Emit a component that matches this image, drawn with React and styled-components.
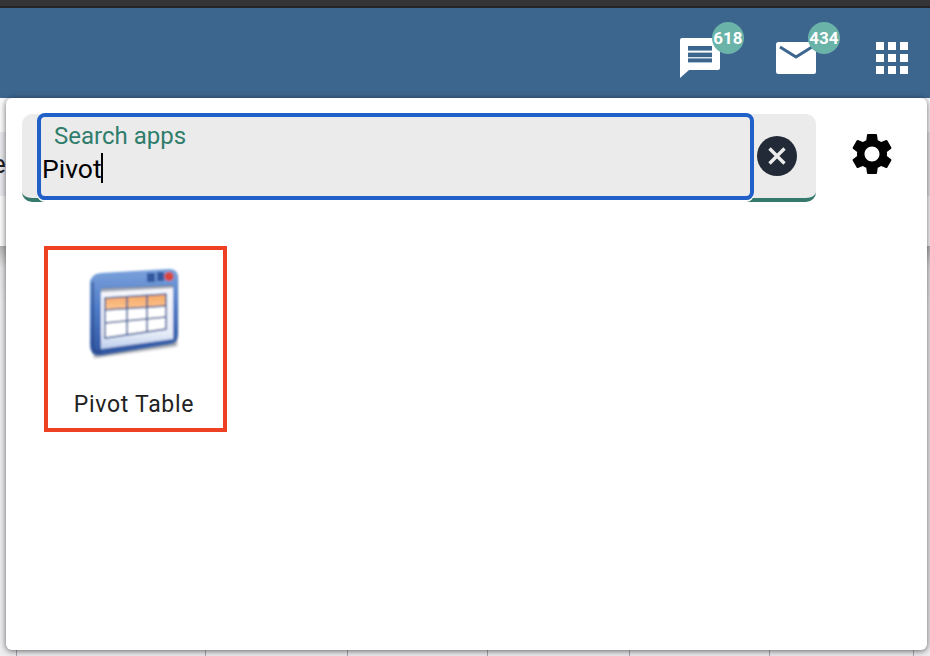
import styled, { createGlobalStyle } from "styled-components";
import { MdSettings } from "react-icons/md";

const GlobalStyle = createGlobalStyle`
html, body {
  margin: 0;
  padding: 0;
  background: #fff;
}
* {
  box-sizing: border-box;
}
`

function ChatIcon() {
    return (
        <svg width="40" height="40" viewBox="0 0 40 40">
            <path d="M2 0H38Q40 0 40 2V30Q40 32 38 32H9L0 40V2Q0 0 2 0Z" fill="#fff" />
            <rect x="8" y="8" width="24" height="4.6" fill="#3d668f" />
            <rect x="8" y="14.6" width="24" height="4.6" fill="#3d668f" />
            <rect x="8" y="20.4" width="24" height="4" fill="#3d668f" />
        </svg>
    )
}

function MailIcon() {
    return (
        <svg width="40" height="32" viewBox="0 0 40 32">
            <rect width="40" height="32" rx="2.5" fill="#fff" />
            <path d="M4 5L20 15L36 5" fill="none" stroke="#3d668f" strokeWidth="3" />
        </svg>
    )
}

function AppsIcon() {
    const spots = [0, 12, 24]
    return (
        <svg width="32" height="32" viewBox="0 0 32 32">
            {spots.map(y => spots.map(x => (
                <rect key={`${x}-${y}`} x={x} y={y} width="8" height="8" fill="#fff" />
            )))}
        </svg>
    )
}

function ClearIcon() {
    return (
        <svg width="40" height="40" viewBox="0 0 40 40">
            <circle cx="20" cy="20" r="20" fill="#212a36" />
            <path d="M12.5 12.5L27.5 27.5M27.5 12.5L12.5 27.5" stroke="#ececec" strokeWidth="3.4" />
        </svg>
    )
}

function PivotIcon() {
    return (
        <svg width="92" height="94" viewBox="0 0 92 94">
            <defs>
                <linearGradient id="frame" x1="0" y1="0" x2="0" y2="1">
                    <stop offset="0" stopColor="#7ba2dc" />
                    <stop offset="0.45" stopColor="#4f7cc8" />
                    <stop offset="1" stopColor="#2f55a0" />
                </linearGradient>
                <linearGradient id="inner" x1="0" y1="0" x2="0" y2="1">
                    <stop offset="0" stopColor="#f7f8fc" />
                    <stop offset="0.75" stopColor="#e6ecf8" />
                    <stop offset="1" stopColor="#bccdec" />
                </linearGradient>
                <linearGradient id="head" x1="0" y1="0" x2="0" y2="1">
                    <stop offset="0" stopColor="#f6a765" />
                    <stop offset="1" stopColor="#fbc590" />
                </linearGradient>
                <filter id="soft" x="-10%" y="-10%" width="120%" height="120%">
                    <feGaussianBlur stdDeviation="0.9" />
                </filter>
                <filter id="shade" x="-10%" y="-10%" width="120%" height="120%">
                    <feGaussianBlur stdDeviation="1.6" />
                </filter>
            </defs>
            <path d="M4 14L89 8V80L6 92Z" fill="#4a4f5c" opacity="0.5" filter="url(#shade)" />
            <g filter="url(#soft)">
                <path d="M13 7L80 3Q90 2 90 12V68Q90 77 82 78L14 89Q2 91 2 79V18Q2 8 13 7Z" fill="url(#frame)" />
                <path d="M5 16V79Q5 87 13 86" fill="none" stroke="#24417f" strokeWidth="2" opacity="0.6" />
                <path d="M13 23L85 20V73L13 83Z" fill="url(#inner)" />
                <path d="M13 22L85 19V22L13 26Z" fill="#6f7688" opacity="0.6" />
                <path d="M17 32L78 28V40L17 44Z" fill="url(#head)" />
                <path d="M17 44L78 40V63L17 72Z" fill="#fff" />
                <path d="M17 32L78 28V63L17 72ZM39 31V69M59 29.500V66M17 44L78 40M17 57L78 51" fill="none" stroke="#3f5a96" strokeWidth="1.600" />
                <rect x="59" y="7" width="8" height="9" fill="#30589f" />
                <rect x="69" y="6" width="7" height="9" fill="#30589f" />
                <circle cx="81" cy="10.500" r="4.600" fill="#d9453d" />
            </g>
        </svg>
    )
}

export default function App() {
    const columns = [189, 142, 140, 142, 140, 144, 17]

    return (
        <Page>
            <GlobalStyle />
            <TopBar />
            <Header>
                <HeaderIcon $gap={56}>
                    <ChatIcon />
                    <Badge>618</Badge>
                </HeaderIcon>
                <HeaderIcon $gap={60}>
                    <MailIcon />
                    <Badge>434</Badge>
                </HeaderIcon>
                <HeaderIcon>
                    <AppsIcon />
                </HeaderIcon>
            </Header>

            <Backdrop>
                <ToolBand><BandText>e</BandText></ToolBand>
                <Grid>
                    {columns.map((w, i) => <Cell key={i} $w={w} />)}
                </Grid>
            </Backdrop>

            <Launcher>
                <SearchRow>
                    <SearchBox>
                        <Focused>
                            <Label>Search apps</Label>
                            <Value>Pivot<Caret /></Value>
                        </Focused>
                        <ClearButton><ClearIcon /></ClearButton>
                    </SearchBox>
                    <GearButton><MdSettings size={50} color="#000" /></GearButton>
                </SearchRow>
                <AppTile>
                    <PivotIcon />
                    <AppName>Pivot Table</AppName>
                </AppTile>
            </Launcher>
        </Page>
    );
}

const Page = styled.div`
position: relative;
width: 930px;
height: 656px;
overflow: hidden;
display: flex;
flex-direction: column;
font-family: Roboto, sans-serif;
`

const TopBar = styled.div`
height: 8px;
flex-shrink: 0;
background: #343436;
border-bottom: 2px solid #242426;
`

const Header = styled.div`
height: 90px;
flex-shrink: 0;
display: flex;
justify-content: flex-end;
align-items: center;
padding: 10px 22px 0 0;
background: #3d668f;
`

const HeaderIcon = styled.div`
position: relative;
height: 40px;
display: flex;
align-items: center;
margin-right: ${props => props.$gap || 0}px;
`

const Badge = styled.span`
position: absolute;
left: 32px;
top: -16px;
width: 32px;
height: 32px;
border-radius: 50%;
background: #6ab3a8;
color: #fff;
font-size: 17px;
font-weight: 700;
line-height: 32px;
text-align: center;
`

const Backdrop = styled.div`
flex: 1;
display: flex;
flex-direction: column;
background: #fbfbfb;
`

const ToolBand = styled.div`
height: 64px;
margin-top: 34px;
flex-shrink: 0;
display: flex;
align-items: center;
overflow: hidden;
background: #e9e9ee;
`

const BandText = styled.span`
margin-left: -8px;
font-size: 26px;
color: #222;
`

const Grid = styled.div`
flex: 1;
display: flex;
margin-top: 50px;
padding-left: 16px;
background: linear-gradient(#b4b4b4, #e6e6e8 22px, #eeeef0 60px);
`

const Cell = styled.div`
width: ${props => props.$w}px;
border-left: 1px solid #a9a9b4;
`

const Launcher = styled.div`
position: absolute;
left: 6px;
top: 98px;
width: 921px;
height: 552px;
padding: 16px;
border-radius: 6px;
background: #fff;
box-shadow: 0 1px 6px rgba(0, 0, 0, 0.6);
`

const SearchRow = styled.div`
display: flex;
align-items: flex-start;
`

const SearchBox = styled.div`
width: 794px;
height: 88px;
display: flex;
align-items: flex-start;
padding-left: 15px;
border-radius: 10px;
background: #ebebeb;
border-bottom: 4px solid #34796b;
`

const Focused = styled.div`
width: 717px;
height: 87px;
margin-top: -1px;
flex-shrink: 0;
padding: 5px 0 0 1px;
border: 4px solid #2060c8;
border-radius: 8px;
box-shadow: 0 2px 0 #fff;
`

const Label = styled.div`
margin-left: 12px;
font-size: 24px;
line-height: 28px;
color: #2f7d6b;
`

const Value = styled.div`
display: flex;
align-items: center;
height: 30px;
margin-top: 3px;
font-size: 26.5px;
color: #000;
`

const Caret = styled.span`
width: 2px;
height: 30px;
margin-left: -1px;
background: #000;
`

const ClearButton = styled.div`
display: flex;
margin: 22px 0 0 3px;
`

const GearButton = styled.div`
display: flex;
margin: 15px 0 0 31px;
`

const AppTile = styled.div`
width: 183px;
height: 186px;
margin: 44px 0 0 22px;
display: flex;
flex-direction: column;
align-items: center;
padding: 16px 3px 0 0;
border: 4px solid #ee4023;
`

const AppName = styled.div`
margin-top: 32px;
font-size: 23px;
line-height: 26px;
letter-spacing: 0.7px;
color: #222;
`
